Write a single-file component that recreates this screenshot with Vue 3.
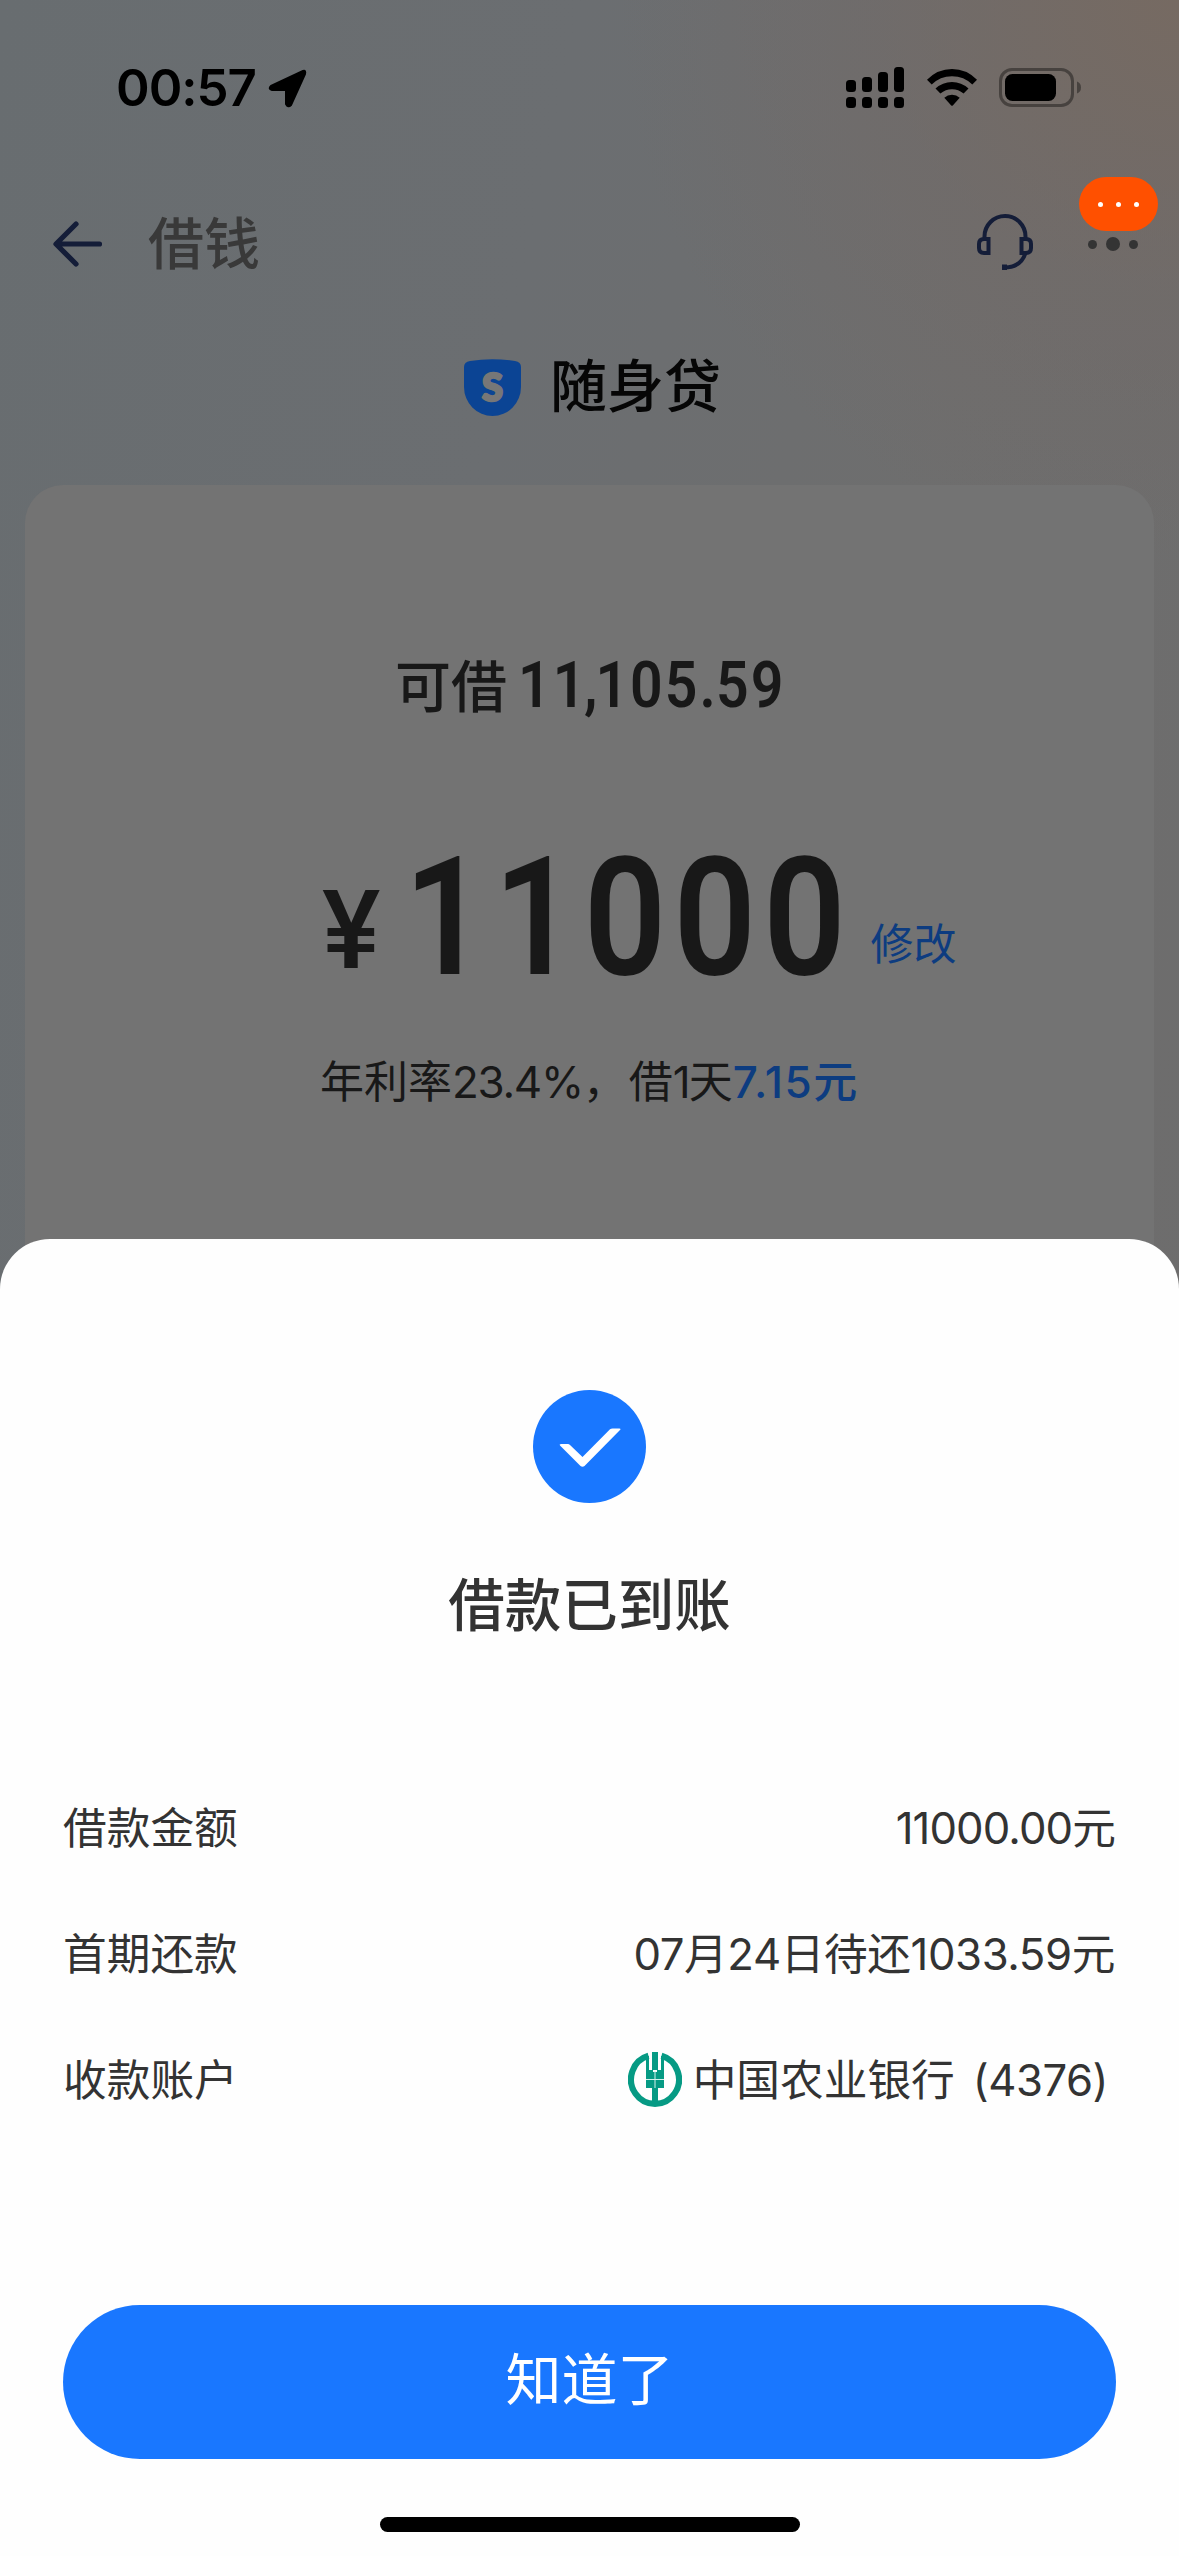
<script setup>
const rows = [
  { label: '借款金额', value: '11000.00元', cls: 'tight' },
  { label: '首期还款', value: '07月24日待还1033.59元', cls: '' },
]
const bars = [
  { x: 0, y: 13, h: 12 },
  { x: 16, y: 10, h: 15 },
  { x: 32, y: 5, h: 20 },
  { x: 48, y: 0, h: 25 },
]
</script>

<template>
  <div class="screen">
    <header class="status">
      <div class="clock">
        <span class="time">00:57</span>
        <svg class="loc" width="39" height="39" viewBox="0 0 39 39">
          <path d="M3 17 L35 2 Q38 1 37 5 L23 36 Q20 39 18 35 V21 H4 Q0 20 3 17Z" stroke="#000" stroke-width="2" stroke-linejoin="round" />
        </svg>
      </div>
      <div class="indicators">
        <svg width="58" height="41" viewBox="0 0 58 41">
          <g v-for="b in bars" :key="b.x">
            <rect :x="b.x" :y="b.y" width="10" :height="b.h" rx="3.5" />
            <rect :x="b.x" y="30" width="10" height="11" rx="3.5" />
          </g>
        </svg>
        <svg class="wifi" width="50" height="37" viewBox="0 0 50 37">
          <path d="M0 10.8 Q10.5 0 25 0 T50 10.8 L45.3 15.5 Q37 7.2 25 7.2 T4.7 15.5Z" />
          <path d="M8.5 19.6 Q15.5 13 25 13 T41.5 19.6 L36.6 24.5 Q31.5 20.2 25 20.2 T13.4 24.5Z" />
          <path d="M17.3 28.7 Q20.5 25.8 25 25.8 T32.7 28.7 L26 36.2 Q25 37.2 24 36.2Z" />
        </svg>
        <svg class="battery" width="82" height="39" viewBox="0 0 82 39">
          <rect x="1.5" y="1.5" width="72" height="36" rx="11.5" fill="none" stroke="#47423f" stroke-width="3" />
          <rect x="6" y="6" width="51" height="27" rx="7.5" />
          <path d="M78 13.5 Q82 15 82 19.5 T78 25.5Z" fill="#47423f" />
        </svg>
      </div>
    </header>

    <nav class="nav">
      <svg class="back" width="50" height="46" viewBox="0 0 50 46" fill="none" stroke="#141d38" stroke-width="5.2" stroke-linecap="round" stroke-linejoin="round">
        <path d="M23 3 L3 23 L23 43 M3.5 23 H46.5" />
      </svg>
      <span class="nav-title">借钱</span>
      <svg class="headset" width="58" height="57" viewBox="0 0 58 57" fill="none" stroke="#141d38" stroke-width="4">
        <path d="M8.5 24 V22.5 A20.5 20.5 0 0 1 49.5 22.5 V24" />
        <path d="M12.5 25 H8 Q3 25 3 30 V34 Q3 39 8 39 H12.5Z" />
        <path d="M45.5 25 H50 Q55 25 55 30 V34 Q55 39 50 39 H45.5Z" />
        <path d="M49.5 39 Q45 53.5 28 53.5" />
        <path d="M27 51.5 H30 V55 H27Z" stroke-width="2" />
      </svg>
      <div class="more">
        <i class="dot"></i><i class="dot big"></i><i class="dot"></i>
        <div class="badge"><i></i><i></i><i></i></div>
      </div>
    </nav>

    <div class="brand">
      <svg width="57" height="57" viewBox="0 0 57 57">
        <path d="M0 8 Q0 3 6 2 Q28 -1.5 51 2 Q57 3 57 8 V28 A28.5 29 0 0 1 0 28Z" fill="#0b4494" />
        <text x="28.5" y="41.5" text-anchor="middle" class="logo-s">S</text>
      </svg>
      <span class="brand-name">随身贷</span>
    </div>

    <main class="card">
      <div class="limit"><span class="limit-label">可借</span><span class="limit-num">11<span class="comma">,</span>105<span class="point">.</span>59</span></div>
      <div class="amount">
        <span class="yen">¥</span><span class="num">11000</span><span class="edit">修改</span>
      </div>
      <div class="rate">年利率<span class="pct">23.4%</span><span class="pause">，</span>借<span class="day">1</span>天<b><span class="cost">7.15</span>元</b></div>
    </main>

    <section class="sheet">
      <svg class="check" width="113" height="113" viewBox="0 0 113 113">
        <circle cx="56.5" cy="56.5" r="56.5" fill="#1977ff" />
        <path d="M28 54 H35 Q36 54 37 55 L49.5 67 L77 39.3 Q78 38.5 79.5 38.5 H86.5 Q88.5 38.5 87 40 L51.5 76 Q49.5 77.5 47.5 76 L27 55.5 Q26 54 28 54Z" fill="#fff" />
      </svg>
      <h1>借款已到账</h1>
      <div class="rows">
        <div v-for="r in rows" :key="r.label" class="row">
          <span>{{ r.label }}</span><span class="value" :class="r.cls">{{ r.value }}</span>
        </div>
        <div class="row">
          <span>收款账户</span>
          <span class="account">
            <svg class="bank-logo" width="54" height="55" viewBox="0 0 54 55">
              <path d="M20.5 3.8 A24 24.5 0 1 0 33.5 3.8" fill="none" stroke="#069a84" stroke-width="6.2" />
              <rect x="24" y="0" width="6" height="18" fill="#069a84" />
              <path d="M18 4 H21 V18 H25 V20 H29 V18 H33 V4 H36 V36 H18Z" fill="#069a84" />
              <path d="M24 35 H30 V50 H24Z" fill="#069a84" />
              <path d="M27 19 V36 M18 27.5 H36" stroke="#d5f0eb" stroke-width="1" />
            </svg>
            <span class="bank">中国农业银行</span><span class="tail">(4376)</span>
          </span>
        </div>
      </div>
      <button class="ok">知道了</button>
      <div class="home"></div>
    </section>
  </div>
</template>

<style>
body {
  margin: 0;
}
</style>

<style scoped>
.screen {
  width: 1179px;
  height: 2556px;
  overflow: hidden;
  display: flex;
  flex-direction: column;
  font-family: Inter, "Noto Sans CJK SC", sans-serif;
  color: #181818;
  background:
    radial-gradient(circle at 1179px 0, #766a62 0, rgba(115, 104, 100, 0.4) 300px, rgba(112, 105, 103, 0) 560px),
    linear-gradient(102deg, #686d70 0, #6b6e71 34%, #6e6e6e 60%, #6d6c6c 100%);
}
.status {
  height: 177px;
  box-sizing: border-box;
  padding: 58px 98px 0 116px;
  display: flex;
  justify-content: space-between;
  align-items: flex-start;
  color: #000;
}
.clock,
.indicators {
  display: flex;
}
.time {
  font-size: 51px;
  line-height: 60px;
  font-weight: 600;
  letter-spacing: -1px;
}
.loc {
  margin: 11px 0 0 12px;
}
.indicators {
  padding-top: 9px;
}
.wifi {
  margin: 2px 22px 0 23px;
}
.battery {
  margin-top: 1px;
}
.nav {
  height: 134px;
  display: flex;
  align-items: center;
  padding-left: 53px;
}
.nav-title {
  margin-left: 45px;
  flex: 1;
  font-size: 56px;
  line-height: 80px;
  font-weight: 500;
  color: #393939;
}
.headset {
  margin: 0 54px 3px 0;
}
.more {
  position: relative;
  width: 91px;
  height: 134px;
  display: flex;
  align-items: center;
  gap: 9px;
}
.dot {
  width: 9px;
  height: 9px;
  border-radius: 50%;
  background: #343434;
}
.dot.big {
  width: 14px;
  height: 14px;
}
.badge {
  position: absolute;
  left: -9px;
  top: 0;
  width: 79px;
  height: 54px;
  border-radius: 27px;
  background: #ff5000;
  display: flex;
  align-items: center;
  justify-content: center;
  gap: 13px;
}
.badge i {
  width: 5px;
  height: 5px;
  border-radius: 50%;
  background: #fff;
}
.brand {
  height: 174px;
  padding-left: 5px;
  display: flex;
  align-items: flex-start;
  justify-content: center;
}
.brand svg {
  margin: 48px -1px 0 1px;
}
.logo-s {
  font: 900 38px Lato, sans-serif;
  fill: #777;
  stroke: #777;
  stroke-width: 2.5px;
  stroke-linejoin: round;
}
.brand-name {
  margin: 36px 0 0 30px;
  font-size: 57px;
  line-height: 80px;
  font-weight: 500;
  color: #060606;
}
.card {
  margin: 0 25px;
  height: 900px;
  flex: none;
  border-radius: 38px;
  background: #737373;
}
.limit {
  margin-top: 160px;
  height: 80px;
  padding-left: 370px;
  display: flex;
  align-items: baseline;
}
.limit-label {
  font-size: 56px;
  line-height: 80px;
  font-weight: 500;
}
.limit-num {
  margin-left: 11px;
  font: 600 65px/80px Roboto, sans-serif;
  letter-spacing: 2.3px;
  transform: scaleX(0.88);
  transform-origin: left;
}
.comma {
  margin: 0 -4.5px 0 -4px;
}
.point {
  margin-right: -2px;
}
.amount {
  margin-top: 90px;
  height: 190px;
  padding-left: 297px;
  display: flex;
  align-items: flex-start;
}
.yen {
  margin-top: 21px;
  font: 500 110px/190px Roboto, sans-serif;
}
.num {
  width: 445px;
  margin: 8px 0 0 24px;
  font: 600 166px/190px Roboto, sans-serif;
  letter-spacing: 8.4px;
  transform: scaleX(0.87);
  transform-origin: left;
}
.edit {
  margin: 99px 0 0 21px;
  font-size: 43px;
  line-height: 60px;
  color: #0d3c80;
}
.rate {
  margin: 47px 0 0 295px;
  font-size: 44px;
  line-height: 60px;
  white-space: nowrap;
}
.pct {
  letter-spacing: -1.3px;
}
.pause {
  margin-right: 2px;
}
.day {
  letter-spacing: -2px;
}
.rate b {
  font-weight: 500;
  color: #0d3c80;
}
.cost {
  letter-spacing: 1.5px;
}
.sheet {
  position: absolute;
  top: 1239px;
  left: 0;
  width: 1179px;
  height: 1317px;
  border-radius: 50px 50px 0 0;
  background: #fefefe;
  color: #333;
  display: flex;
  flex-direction: column;
  align-items: center;
}
.check {
  margin-top: 151px;
  flex: none;
}
h1 {
  margin: 63px 0 0;
  font-size: 56.5px;
  line-height: 80px;
  font-weight: 500;
}
.rows {
  align-self: stretch;
  margin-top: 120px;
  padding: 0 64px 0 63px;
}
.row {
  height: 126px;
  display: flex;
  justify-content: space-between;
  align-items: center;
  font-size: 43.7px;
  line-height: 60px;
}
.value {
  letter-spacing: -0.4px;
}
.value.tight {
  letter-spacing: -0.9px;
}
.account {
  display: flex;
  align-items: center;
}
.bank-logo {
  margin-bottom: 3px;
}
.bank {
  margin-left: 11px;
}
.tail {
  margin: 0 7px 0 18px;
  letter-spacing: -0.5px;
}
.ok {
  margin-top: 161px;
  width: 1053px;
  height: 154px;
  flex: none;
  padding: 0 0 4px;
  border: 0;
  border-radius: 77px;
  background: #1977ff;
  color: #fff;
  font: 400 56px/80px Inter, "Noto Sans CJK SC", sans-serif;
}
.home {
  margin-top: 58px;
  width: 420px;
  height: 15px;
  border-radius: 8px;
  background: #000;
}
</style>
